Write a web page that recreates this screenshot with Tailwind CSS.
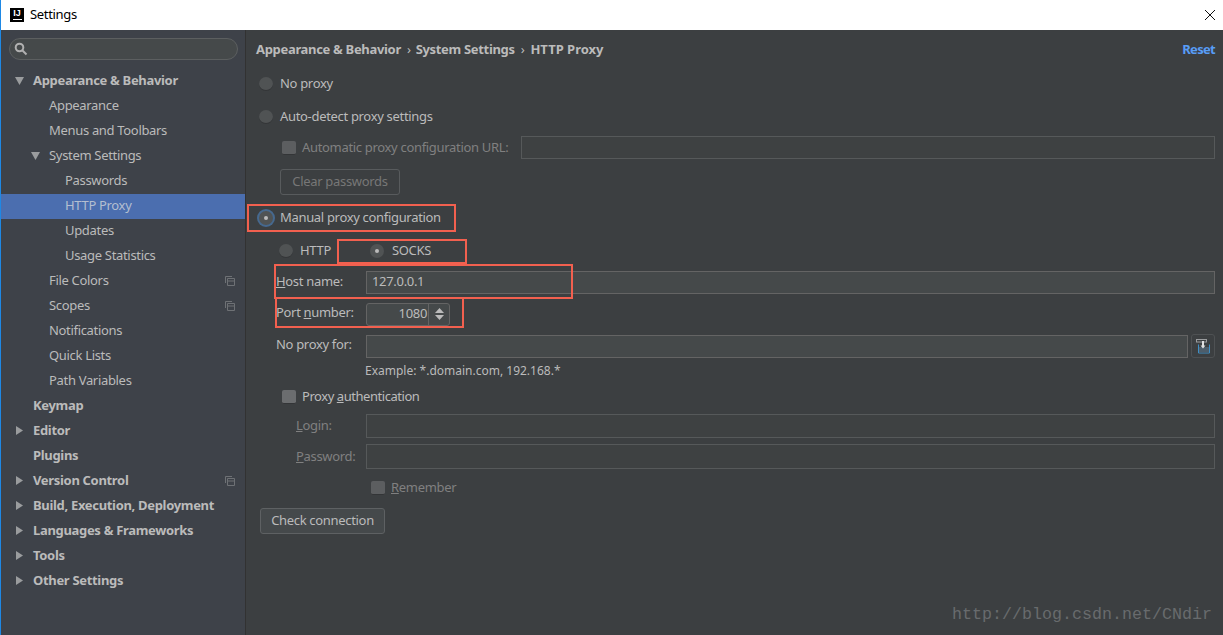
<!DOCTYPE html>
<html lang="en">
<head>
    <meta charset="UTF-8">
    <title>Settings</title>
    <script src="https://cdn.jsdelivr.net/npm/@tailwindcss/browser@4"></script>
</head>
<body class="w-[1223px] h-[635px] overflow-hidden bg-[#3c3f41] text-[#bbbbbb] text-[13px] tracking-[-0.32px] font-['Noto_Sans','Open_Sans',sans-serif]">
    <div class="relative flex flex-col h-[635px] border-l border-l-[#1e88e5]">
        <!-- Title bar -->
        <div class="flex items-center h-[30px] bg-white text-black shrink-0">
            <div class="flex flex-col items-center w-[14px] h-[14px] ml-[9px] bg-black text-white">
                <span class="text-[9px] font-bold leading-[10px] tracking-[0px] font-['Liberation_Sans',sans-serif]">IJ</span>
                <span class="block w-[9px] h-px bg-white mt-px"></span>
            </div>
            <span class="ml-[6px] text-[13px]">Settings</span>
            <svg class="ml-auto mr-[7px] w-[12px] h-[12px]" viewBox="0 0 12 12" fill="none" stroke="#111" stroke-width="1"><path d="M1 1l10 10M11 1L1 11"/></svg>
        </div>

        <div class="flex flex-1 min-h-0">
            <!-- Sidebar -->
            <aside class="w-[245px] shrink-0 bg-[#3e4249] border-r border-[#323232]">
                <div class="flex items-center h-[22px] mt-[8px] ml-[8px] rounded-full border border-[#5c5f60] bg-[#45494a] w-[229px]">
                    <svg class="ml-[4px] w-[14px] h-[14px]" viewBox="0 0 14 14" fill="none" stroke="#b0b0b0" stroke-width="2"><circle cx="5.5" cy="5.5" r="3.8"/><path d="M8.5 8.5l4 4"/></svg>
                </div>
                <nav class="mt-[9px]">
                    <div class="flex items-center h-[25px] pb-[2px] font-bold"><svg class="ml-[14px] mr-[9px] w-[9px] h-[8px]" viewBox="0 0 9 8" fill="#9a9c9e"><path d="M0 0h9L4.5 8z"/></svg>Appearance &amp; Behavior</div>
                    <div class="flex items-center h-[25px] pb-[2px] pl-[48px]">Appearance</div>
                    <div class="flex items-center h-[25px] pb-[2px] pl-[48px]">Menus and Toolbars</div>
                    <div class="flex items-center h-[25px] pb-[2px]"><svg class="ml-[30px] mr-[9px] w-[9px] h-[8px]" viewBox="0 0 9 8" fill="#9a9c9e"><path d="M0 0h9L4.5 8z"/></svg>System Settings</div>
                    <div class="flex items-center h-[25px] pb-[2px] pl-[64px]">Passwords</div>
                    <div class="flex items-center h-[25px] pb-[2px] pl-[64px] bg-[#4b6eaf] text-[#b4bfd0]">HTTP Proxy</div>
                    <div class="flex items-center h-[25px] pb-[2px] pl-[64px]">Updates</div>
                    <div class="flex items-center h-[25px] pb-[2px] pl-[64px]">Usage Statistics</div>
                    <div class="flex items-center justify-between h-[25px] pb-[2px] pl-[48px] pr-[10px]">File Colors<svg class="w-[10px] h-[10px]" viewBox="0 0 10 10" fill="none" stroke="#6e7175"><path d="M.5 7V.5H7"/><path d="M2.5 2.5h7v7h-7zM2.5 5h7"/></svg></div>
                    <div class="flex items-center justify-between h-[25px] pb-[2px] pl-[48px] pr-[10px]">Scopes<svg class="w-[10px] h-[10px]" viewBox="0 0 10 10" fill="none" stroke="#6e7175"><path d="M.5 7V.5H7"/><path d="M2.5 2.5h7v7h-7zM2.5 5h7"/></svg></div>
                    <div class="flex items-center h-[25px] pb-[2px] pl-[48px]">Notifications</div>
                    <div class="flex items-center h-[25px] pb-[2px] pl-[48px]">Quick Lists</div>
                    <div class="flex items-center h-[25px] pb-[2px] pl-[48px]">Path Variables</div>
                    <div class="flex items-center h-[25px] pb-[2px] pl-[32px] font-bold">Keymap</div>
                    <div class="flex items-center h-[25px] pb-[2px] font-bold"><svg class="ml-[15px] mr-[10px] w-[7px] h-[9px]" viewBox="0 0 7 9" fill="#9a9c9e"><path d="M0 0l7 4.5L0 9z"/></svg>Editor</div>
                    <div class="flex items-center h-[25px] pb-[2px] pl-[32px] font-bold">Plugins</div>
                    <div class="flex items-center justify-between h-[25px] pb-[2px] pr-[10px] font-bold"><span class="flex items-center"><svg class="ml-[15px] mr-[10px] w-[7px] h-[9px]" viewBox="0 0 7 9" fill="#9a9c9e"><path d="M0 0l7 4.5L0 9z"/></svg>Version Control</span><svg class="w-[10px] h-[10px]" viewBox="0 0 10 10" fill="none" stroke="#6e7175"><path d="M.5 7V.5H7"/><path d="M2.5 2.5h7v7h-7zM2.5 5h7"/></svg></div>
                    <div class="flex items-center h-[25px] pb-[2px] font-bold"><svg class="ml-[15px] mr-[10px] w-[7px] h-[9px]" viewBox="0 0 7 9" fill="#9a9c9e"><path d="M0 0l7 4.5L0 9z"/></svg>Build, Execution, Deployment</div>
                    <div class="flex items-center h-[25px] pb-[2px] font-bold"><svg class="ml-[15px] mr-[10px] w-[7px] h-[9px]" viewBox="0 0 7 9" fill="#9a9c9e"><path d="M0 0l7 4.5L0 9z"/></svg>Languages &amp; Frameworks</div>
                    <div class="flex items-center h-[25px] pb-[2px] font-bold"><svg class="ml-[15px] mr-[10px] w-[7px] h-[9px]" viewBox="0 0 7 9" fill="#9a9c9e"><path d="M0 0l7 4.5L0 9z"/></svg>Tools</div>
                    <div class="flex items-center h-[25px] pb-[2px] font-bold"><svg class="ml-[15px] mr-[10px] w-[7px] h-[9px]" viewBox="0 0 7 9" fill="#9a9c9e"><path d="M0 0l7 4.5L0 9z"/></svg>Other Settings</div>
                </nav>
            </aside>

            <!-- Main panel -->
            <main class="flex-1 min-w-0 pt-px pl-[13px] pr-[8px]">
                <div class="flex items-center justify-between h-[38px] -ml-[3px]">
                    <div class="flex items-center font-bold">Appearance &amp; Behavior<span class="ml-[6px] mr-[5px] font-normal">›</span>System Settings<span class="mx-[6px] font-normal">›</span><span class="tracking-[0px]">HTTP Proxy</span></div>
                    <span class="font-bold tracking-[-0.7px] text-[#589df6]">Reset</span>
                </div>

                <div class="flex items-center gap-[7px] h-[32px] pb-[2px]">
                    <span class="w-[14px] h-[14px] rounded-full bg-[#505354] border-b border-[#333537]"></span>No proxy
                </div>
                <div class="flex items-center gap-[7px] h-[32px]">
                    <span class="w-[14px] h-[14px] rounded-full bg-[#505354] border-b border-[#333537]"></span>Auto-detect proxy settings
                </div>
                <div class="flex items-center h-[31px] pb-[2px] pl-[23px] text-[#808080]">
                    <span class="w-[14px] h-[14px] rounded-[2px] bg-[#5c5e60] border-b border-[#333537] mr-[6px]"></span>Automatic proxy configuration URL:
                    <div class="ml-auto w-[694px] h-[23px] border border-[#56595a] bg-[#3e4142]"></div>
                </div>
                <div class="flex items-center h-[36px] pl-[21px]">
                    <div class="flex items-center justify-center w-[120px] h-[26px] rounded-[3px] border border-[#585b5d] text-[#777777]">Clear passwords</div>
                </div>
                <div class="flex items-center gap-[7px] h-[36px]">
                    <span class="flex items-center justify-center w-[14px] h-[14px] rounded-full bg-[#505354] shadow-[0_0_0_2px_#46698f]"><span class="w-[4px] h-[4px] rounded-full bg-[#bbbbbb]"></span></span>Manual proxy configuration
                </div>
                <div class="flex items-center h-[30px] pl-[20px]">
                    <span class="w-[14px] h-[14px] rounded-full bg-[#505354] border-b border-[#333537] mr-[7px]"></span>HTTP
                    <span class="flex items-center justify-center w-[14px] h-[14px] rounded-full bg-[#505354] ml-[39px] mr-[8px]"><span class="w-[4px] h-[4px] rounded-full bg-[#bbbbbb]"></span></span>SOCKS
                </div>
                <div class="flex items-center h-[32px] pl-[17px]">
                    <span class="w-[90px]"><u>H</u>ost name:</span>
                    <div class="flex items-center flex-1 h-[23px] px-[5px] border border-[#646464] bg-[#45494a]">127.0.0.1</div>
                </div>
                <div class="flex items-center h-[32px] pl-[17px]">
                    <span class="w-[90px] mb-[2px]">Port <u>n</u>umber:</span>
                    <div class="flex items-center w-[84px] h-[23px] rounded-[3px] border border-[#646464] bg-[#45494a]">
                        <span class="flex-1 text-right pr-[1px]">1080</span>
                        <div class="flex flex-col items-center justify-center gap-[2px] w-[21px] h-full border-l border-[#646464]">
                            <svg class="w-[9px] h-[5px]" viewBox="0 0 9 5" fill="#bbbbbb"><path d="M4.5 0L9 5H0z"/></svg>
                            <svg class="w-[9px] h-[5px]" viewBox="0 0 9 5" fill="#bbbbbb"><path d="M0 0h9L4.5 5z"/></svg>
                        </div>
                    </div>
                </div>
                <div class="flex items-center h-[32px] pl-[17px]">
                    <span class="w-[90px] mb-[2px]">No proxy for:</span>
                    <div class="flex-1 h-[23px] border border-[#646464] bg-[#45494a]"></div>
                    <div class="flex items-center justify-center w-[24px] h-[24px] ml-[3px] rounded-[3px] border border-[#4e5153]">
                        <svg class="w-[16px] h-[16px]" viewBox="0 0 16 16" fill="none"><path d="M3.5 6.5v8.5h11v-8.5" stroke="#3f8fc4"/><rect x="4" y="9" width="10" height="5.5" fill="#4d5d6a"/><rect x="1.5" y="1.5" width="10" height="2.5" stroke="#9a9c9e"/><path d="M8 3v6" stroke="#e0e0e0" stroke-width="2"/><path d="M5.5 7.5h5L8 10.5z" fill="#e0e0e0"/></svg>
                    </div>
                </div>
                <div class="flex items-center h-[18px] pl-[106px] text-[12px] tracking-[0px]">Example: *.domain.com, 192.168.*</div>
                <div class="flex items-center h-[34px] pl-[23px]">
                    <span class="w-[14px] h-[14px] rounded-[2px] bg-[#6b6d6f] border-b border-[#333537] mr-[6px]"></span><span class="tracking-[-0.45px]">Proxy <u>a</u>uthentication</span>
                </div>
                <div class="flex items-center h-[24px] pl-[37px] text-[#808080]">
                    <span class="w-[70px]"><u>L</u>ogin:</span>
                    <div class="flex-1 h-[24px] border border-[#56595a] bg-[#3e4142]"></div>
                </div>
                <div class="flex items-center h-[37px] pl-[37px] text-[#808080]">
                    <span class="w-[70px]"><u>P</u>assword:</span>
                    <div class="flex-1 h-[25px] border border-[#56595a] bg-[#3e4142]"></div>
                </div>
                <div class="flex items-center h-[25px] pl-[112px] text-[#808080]">
                    <span class="w-[14px] h-[14px] rounded-[2px] bg-[#5c5e60] border-b border-[#333537] mr-[6px]"></span><span><u>R</u>emember</span>
                </div>
                <div class="flex items-center justify-center w-[125px] h-[26px] mt-[8px] ml-px rounded-[3px] border border-[#5e6163] bg-[#45494b]">Check connection</div>
            </main>
        </div>

        <!-- Annotation boxes drawn over the screenshot -->
        <div class="absolute left-[246px] top-[204px] w-[209px] h-[28px] border-2 border-[#f2604f]"></div>
        <div class="absolute left-[336px] top-[239px] w-[130px] h-[25px] border-2 border-[#f2604f]"></div>
        <div class="absolute left-[273px] top-[264px] w-[299px] h-[35px] border-2 border-[#f2604f]"></div>
        <div class="absolute left-[274px] top-[297px] w-[189px] h-[31px] border-2 border-[#f2604f]"></div>

        <div class="absolute right-[11px] top-[604px] text-[16.67px] leading-[22px] tracking-[0px] text-[#686b6d] font-['Liberation_Mono',monospace]">http://blog.csdn.net/CNdir</div>
    </div>
</body>
</html>
